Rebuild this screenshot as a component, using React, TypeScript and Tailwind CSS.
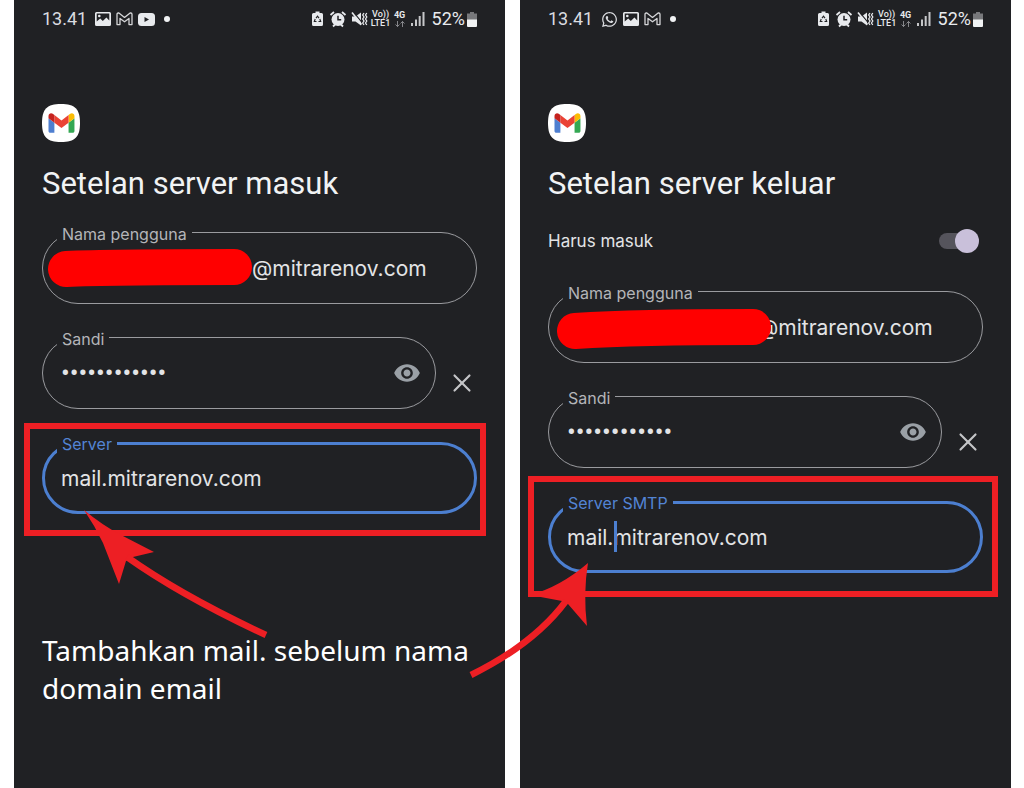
import type { ReactNode } from 'react'
import { X } from 'lucide-react'
import { FaWhatsapp } from 'react-icons/fa'
import { MdVisibility } from 'react-icons/md'

function ImageIcon() {
  return (
    <svg viewBox="0 0 16 14" className="h-[14px] w-4" aria-hidden="true">
      <path
        fillRule="evenodd"
        fill="#e8eaed"
        d="M1.500 0h13A1.500 1.500 0 0 1 16 1.500v11a1.500 1.500 0 0 1-1.500 1.500h-13A1.500 1.500 0 0 1 0 12.500v-11A1.500 1.500 0 0 1 1.500 0ZM1.700 1.600v7.800L5.200 6.600l2.600 2.300 3.600-3.300 2.900 2.800V1.600ZM4.300 2.700a1.300 1.300 0 1 1 0 2.600 1.300 1.300 0 0 1 0-2.600Z"
      />
    </svg>
  )
}

function MailOutlineIcon() {
  return (
    <svg viewBox="0 0 17 14" className="h-[14px] w-[17px]" fill="none" stroke="#d5d6d8" strokeWidth="1.300" strokeLinejoin="round" aria-hidden="true">
      <path d="M1 2.300Q1 1 2.200 1h.700L8.500 5.400 14.100 1h.700Q16 1 16 2.300V12.600h-3V6.400L8.500 9.800 4 6.400v6.200H1Z" />
    </svg>
  )
}

function VideoIcon() {
  return (
    <svg viewBox="0 0 17 13" className="h-[13px] w-[17px]" aria-hidden="true">
      <rect width="17" height="13" rx="3.500" fill="#e8eaed" />
      <path d="M6.500 4v5l4.500-2.500Z" fill="#202124" />
    </svg>
  )
}

function SystemIcons() {
  return (
    <div className="flex items-center text-[#e8eaed]">
      <svg viewBox="0 0 56 18" className="h-[18px] w-14" fill="#e8eaed" aria-hidden="true">
        {/* battery saver */}
        <path d="M3.500 1.500h4v1.500h2q1.500 0 1.500 1.500v10q0 1.500-1.500 1.500h-8Q0 16 0 14.500v-10Q0 3 1.500 3h2Z" />
        <path d="M4 8.200 5.500 6.200 7 8.200M7.800 9l.900 2.500H6.500M4.500 11.500H2.300L3.200 9" fill="none" stroke="#202124" strokeWidth="1.100" />
        {/* alarm */}
        <path d="M18.500 5 22 2M33.500 5 30 2M21 16.500l2-2M31 16.500l-2-2" stroke="#e8eaed" strokeWidth="1.800" />
        <circle cx="26" cy="9.500" r="6.500" />
        <path d="M26 5.800v4h3.200" fill="none" stroke="#202124" strokeWidth="1.500" />
        {/* muted, vibrating */}
        <path d="M40 6.500h3.500L49 2.500v13l-5.500-4H40Z" />
        <path d="m41.500 2.200 9 11" stroke="#202124" strokeWidth="1.200" />
        <path d="m40 2.500 9.500 12" stroke="#e8eaed" strokeWidth="1.600" />
        <path d="m52 3-1.300 2L52 7l-1.300 2 1.300 2-1.300 2 1.300 2M54.800 3l-1.300 2 1.300 2-1.300 2 1.300 2-1.300 2 1.300 2" fill="none" stroke="#e8eaed" strokeWidth="1.300" />
      </svg>
      <div className="ml-[3px] w-5 text-center text-[9px] leading-[9px] font-medium">
        <div>Vo))</div>
        <div>LTE1</div>
      </div>
      <div className="ml-[2px] flex w-[14px] flex-col items-center text-[9px] leading-[9px] font-bold">
        <div>4G</div>
        <svg viewBox="0 0 12 8" className="h-2 w-3" fill="none" stroke="#85868a" aria-hidden="true">
          <path d="M3.500 1v6M1.500 4.500l2 2 2-2M8.500 7V1M6.500 3.500l2-2 2 2" />
        </svg>
      </div>
      <svg viewBox="0 0 14 14" className="ml-1 h-[14px] w-[14px]" fill="#c6c7c9" aria-hidden="true">
        <path d="M0 11h2v3H0ZM4 7.500h2V14H4ZM7.700 4h2v10h-2ZM11.500 0h2v14h-2Z" />
      </svg>
      <span className="ml-[7px] text-[18px] leading-6">52%</span>
      <svg viewBox="0 0 10 15" className="ml-[2px] h-[15px] w-[10px]" aria-hidden="true">
        <path d="M3 0h4v1.500h3V8H0V1.500h3Z" fill="#77787b" />
        <path d="M0 7.500h10V14q0 1-1 1H1q-1 0-1-1Z" fill="#f1f3f4" />
      </svg>
    </div>
  )
}

function StatusBar({ children }: { children: ReactNode }) {
  return (
    <header className="flex h-[38px] items-center justify-between font-[Roboto,sans-serif] text-[#dadce0]">
      <div className="flex items-center gap-[5px]">
        <span className="mr-[3px] text-[18px] leading-6">13.41</span>
        {children}
        <span className="ml-1 h-[6px] w-[6px] rounded-full bg-[#f1f3f4]" />
      </div>
      <SystemIcons />
    </header>
  )
}

function GmailLogo() {
  return (
    <svg viewBox="0 0 38 38" className="mt-[66px] h-[38px] w-[38px]" role="img" aria-label="Gmail">
      <path d="M19 0C33 0 38 5 38 19s-5 19-19 19S0 33 0 19 5 0 19 0Z" fill="#fff" />
      <g transform="translate(6.500 9.300) scale(.295) translate(-52 -42)">
        <path d="M58 108h14V74L52 59v43c0 3.320 2.690 6 6 6" fill="#4f7fd0" />
        <path d="M120 108h14c3.320 0 6-2.690 6-6V59l-20 15" fill="#34a853" />
        <path d="M120 48v26l20-15v-8c0-7.420-8.470-11.650-14.400-7.200" fill="#fbbc04" />
        <path d="M72 74V48l24 18 24-18v26L96 92" fill="#ea4335" />
        <path d="M52 51v8l20 15V48l-5.600-4.200c-5.940-4.450-14.400-.220-14.400 7.200" fill="#c5221f" />
      </g>
    </svg>
  )
}

type FieldProps = {
  id: string
  label: string
  value: string
  type?: string
  active?: boolean
  inputClass: string
  children?: ReactNode
}

function Field({ id, label, value, type = 'text', active, inputClass, children }: FieldProps) {
  return (
    <div className="relative flex-1">
      <label
        htmlFor={id}
        className={`absolute -top-[7px] left-[15px] bg-[#202124] px-[5px] text-[16px] leading-[18px] ${active ? 'text-[#5384d4]' : 'text-[#b4b5b9]'}`}
      >
        {label}
      </label>
      <input
        id={id}
        type={type}
        defaultValue={value}
        spellCheck={false}
        className={`block h-[72px] w-full rounded-[36px] bg-transparent pr-4 text-[#e3e4e6] outline-none ${inputClass} ${active ? 'border-[3px] border-[#4c7fd0]' : 'border border-[#9a9b9f]'}`}
      />
      {children}
    </div>
  )
}

function PasswordRow({ id }: { id: string }) {
  return (
    <div className="flex items-end gap-[11px]">
      <Field id={id} label="Sandi" value="••••••••••••" type="password" inputClass="pl-[18px] font-[Roboto,sans-serif] text-[26px]">
        <button type="button" aria-label="Tampilkan sandi" className="absolute top-[22px] right-[15px] text-[#9aa0a6]">
          <MdVisibility size={28} />
        </button>
      </Field>
      <button type="button" aria-label="Hapus sandi" className="flex h-[52px] w-[30px] items-center justify-center text-[#c4c5c8]">
        <X size={30} strokeWidth={1.7} />
      </button>
    </div>
  )
}

function Panel({ title, icons, children }: { title: string; icons: ReactNode; children: ReactNode }) {
  return (
    <section className="min-w-0 flex-1 bg-[#202124] px-7">
      <StatusBar>{icons}</StatusBar>
      <GmailLogo />
      <h1 className="mt-[22px] font-[Roboto,sans-serif] text-[31px] leading-10 text-[#f1f3f4]">{title}</h1>
      {children}
    </section>
  )
}

export default function App() {
  return (
    <main className="flex min-h-screen gap-[15px] bg-white pr-[13px] pl-[14px] font-[Inter,sans-serif]">
      <Panel
        title="Setelan server masuk"
        icons={
          <>
            <ImageIcon />
            <MailOutlineIcon />
            <VideoIcon />
          </>
        }
      >
        <form className="mt-7 flex flex-col gap-[33px]">
          <Field id="in-user" label="Nama pengguna" value="@mitrarenov.com" inputClass="pl-[209px] text-[21px]">
            <svg viewBox="0 0 206 40" className="absolute top-4 left-[5px] h-10 w-[206px]" aria-hidden="true">
              <path d="M19 21 Q60 19 187 19" fill="none" stroke="#f00" strokeWidth="36" strokeLinecap="round" />
            </svg>
          </Field>
          <PasswordRow id="in-pass" />
          <Field id="in-server" label="Server" value="mail.mitrarenov.com" active inputClass="pl-4 text-[21px]">
            <span className="pointer-events-none absolute -top-[19px] -right-[9px] -bottom-[22px] -left-[18px] border-[6px] border-[#ed1f24]" />
            <svg viewBox="84 510 184 130" className="pointer-events-none absolute top-[68px] left-[42px] h-[130px] w-[184px]" aria-hidden="true">
              <path d="M84 510Q102 525 121 535L154 552 133 557 126 561 119 584 103 543Q95 526 84 510Z" fill="#ed1f24" />
              <path d="M127 557Q182 596 266 635" fill="none" stroke="#ed1f24" strokeWidth="6.500" />
            </svg>
          </Field>
        </form>
        <p className="mt-[117px] font-['Noto_Sans',sans-serif] text-[28px] leading-[38px] text-white">
          Tambahkan mail. sebelum nama
          <br />
          domain email
        </p>
      </Panel>

      <Panel
        title="Setelan server keluar"
        icons={
          <>
            <FaWhatsapp size={17} />
            <ImageIcon />
            <MailOutlineIcon />
          </>
        }
      >
        <form className="mt-[25px]">
          <div className="flex h-6 items-center justify-between pr-1">
            <label htmlFor="out-login" className="text-[17px] leading-6 text-[#e3e4e6]">
              Harus masuk
            </label>
            <input
              id="out-login"
              type="checkbox"
              role="switch"
              defaultChecked
              className="relative h-6 w-10 appearance-none before:absolute before:top-1 before:left-0 before:h-4 before:w-9 before:rounded-full before:bg-[#55545c] after:absolute after:top-0 after:right-0 after:h-6 after:w-6 after:rounded-full after:bg-[#c9c0da]"
            />
          </div>
          <div className="mt-[38px] flex flex-col gap-[33px]">
            <Field id="out-user" label="Nama pengguna" value="@mitrarenov.com" inputClass="pl-[209px] text-[21px]">
              <svg viewBox="0 0 214 42" className="absolute top-[17px] left-[9px] h-[42px] w-[214px]" aria-hidden="true">
                <path d="M18 23Q80 19 196 19" fill="none" stroke="#f00" strokeWidth="36" strokeLinecap="round" />
              </svg>
            </Field>
            <PasswordRow id="out-pass" />
            <Field id="out-server" label="Server SMTP" value="mail.mitrarenov.com" active inputClass="pl-4 text-[21px]">
              <span className="pointer-events-none absolute top-5 left-[66px] h-[31px] w-[3px] bg-[#4c7fd0]" />
              <span className="pointer-events-none absolute -top-[25px] -right-[15px] -bottom-6 -left-5 border-[6px] border-[#ed1f24]" />
              <svg viewBox="468 563 122 118" className="pointer-events-none absolute top-[62px] -left-20 h-[118px] w-[122px]" aria-hidden="true">
                <path d="M588 563Q583 593 587 626L568 604 562 601 530 595Q560 587 588 563Z" fill="#ed1f24" />
                <path d="M471 675Q534 644 566 601" fill="none" stroke="#ed1f24" strokeWidth="6.500" />
              </svg>
            </Field>
          </div>
        </form>
      </Panel>
    </main>
  )
}
